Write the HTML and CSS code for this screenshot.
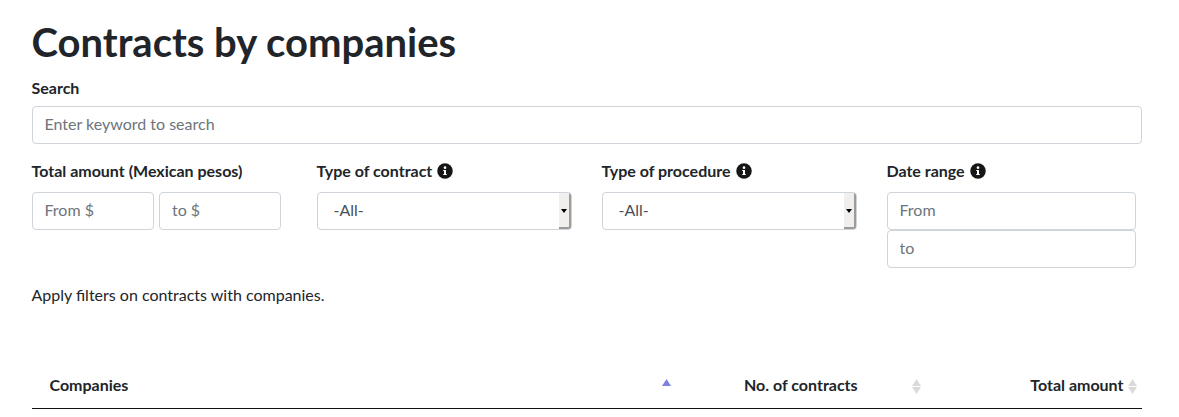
FILE: index.html
```html
<!DOCTYPE html>
<html lang="en">
<head>
<meta charset="utf-8">
<title>Contracts by companies</title>
<link rel="stylesheet" href="styles.css">
</head>
<body>
<svg class="defs" width="0" height="0"><symbol id="info" viewBox="0 0 16 16"><circle cx="8" cy="8" r="7.75"/><path class="info-mark" d="M6.200 6.900h2.800v4h.8v1.200H6.200v-1.200H7V8.100h-.8z"/><circle class="info-mark" cx="8" cy="4.700" r="1.350"/></symbol></svg>
<main class="page">
  <h1 class="title">Contracts by companies</h1>
  <label class="label search-label" for="q">Search</label>
  <input class="field" id="q" placeholder="Enter keyword to search">
  <div class="filters">
    <div class="filter">
      <span class="label">Total amount (Mexican pesos)</span>
      <div class="amounts"><input class="field amount" placeholder="From $"><input class="field amount" placeholder="to $"></div>
    </div>
    <div class="filter">
      <span class="label">Type of contract <svg class="info"><use href="#info"/></svg></span>
      <div class="field select"><span>-All-</span><span class="drop"></span></div>
    </div>
    <div class="filter">
      <span class="label">Type of procedure <svg class="info"><use href="#info"/></svg></span>
      <div class="field select"><span>-All-</span><span class="drop"></span></div>
    </div>
    <div class="filter">
      <span class="label">Date range <svg class="info"><use href="#info"/></svg></span>
      <div class="dates"><input class="field" placeholder="From"><input class="field" placeholder="to"></div>
    </div>
  </div>
  <p class="hint">Apply filters on contracts with companies.</p>
  <div class="thead">
    <div class="th companies"><span>Companies</span><svg class="sort" viewBox="0 0 9 18"><path class="active" d="M0 10L4.500 3L9 10z"/></svg></div>
    <div class="th count"><span>No. of contracts</span><svg class="sort" viewBox="0 0 9 18"><path d="M0 10L4.500 3L9 10zM0 11h9l-4.500 7z"/></svg></div>
    <div class="th total"><span>Total amount</span><svg class="sort" viewBox="0 0 9 18"><path d="M0 10L4.500 3L9 10zM0 11h9l-4.500 7z"/></svg></div>
  </div>
</main>
</body>
</html>
```
FILE: styles.css
```css
* { box-sizing: border-box; }
body { margin: 0; background: #fff; color: #212529; font: 400 16px/24px Lato, sans-serif; overflow: hidden; }
.defs { position: absolute; }
.page { width: 1110px; margin-left: 31.5px; padding-top: 18px; }
.title { margin: 0 0 10px; font-size: 40px; line-height: 48px; font-weight: 700; }
.label { display: flex; align-items: center; gap: 5px; height: 24px; font-weight: 700; white-space: nowrap; }
.search-label { margin-bottom: 6px; }
.field { display: block; width: 100%; height: 38px; margin: 0; padding: 4px 12px 8px; border: 1px solid #ced4da; border-radius: 4px; background: #fff; color: #495057; font: inherit; }
.field::placeholder { color: #6c757d; opacity: 1; }
.filters { display: grid; grid-template-columns: 255px 255px 255px 249px; column-gap: 30px; margin-top: 15px; }
.filter .label { margin-bottom: 9px; }
.amounts { display: flex; gap: 5px; }
.amount { width: 122px; }
.amount + .amount { padding-left: 12.5px; }
.info { width: 16px; height: 16px; fill: #161616; }
.info-mark { fill: #fff; }
.select { display: flex; justify-content: space-between; padding: 0 0 0 16px; line-height: 34px; overflow: hidden; }
.drop { display: flex; align-items: center; justify-content: center; width: 12px; height: 36px; background: #f0efee; border-right: 2px solid #9c9b9a; border-bottom: 2px solid #9c9b9a; }
.drop::after { content: ""; margin: 2px 0 0 1px; border: 3.500px solid transparent; border-width: 4px 3.500px 0; border-top-color: #000; flex: none; }
.hint { margin: 15px 0 0; }
.thead { display: flex; height: 48px; margin-top: 54px; border-bottom: 1px solid #111; font-weight: 700; }
.th { display: flex; align-items: center; }
.companies { width: 639px; padding-left: 18px; justify-content: space-between; }
.count { width: 250px; padding-left: 73.5px; justify-content: space-between; }
.total { flex: 1; padding-right: 5px; justify-content: flex-end; gap: 4px; }
.sort { width: 9px; height: 18px; fill: #dadada; }
.active { fill: #8080e0; }
```
